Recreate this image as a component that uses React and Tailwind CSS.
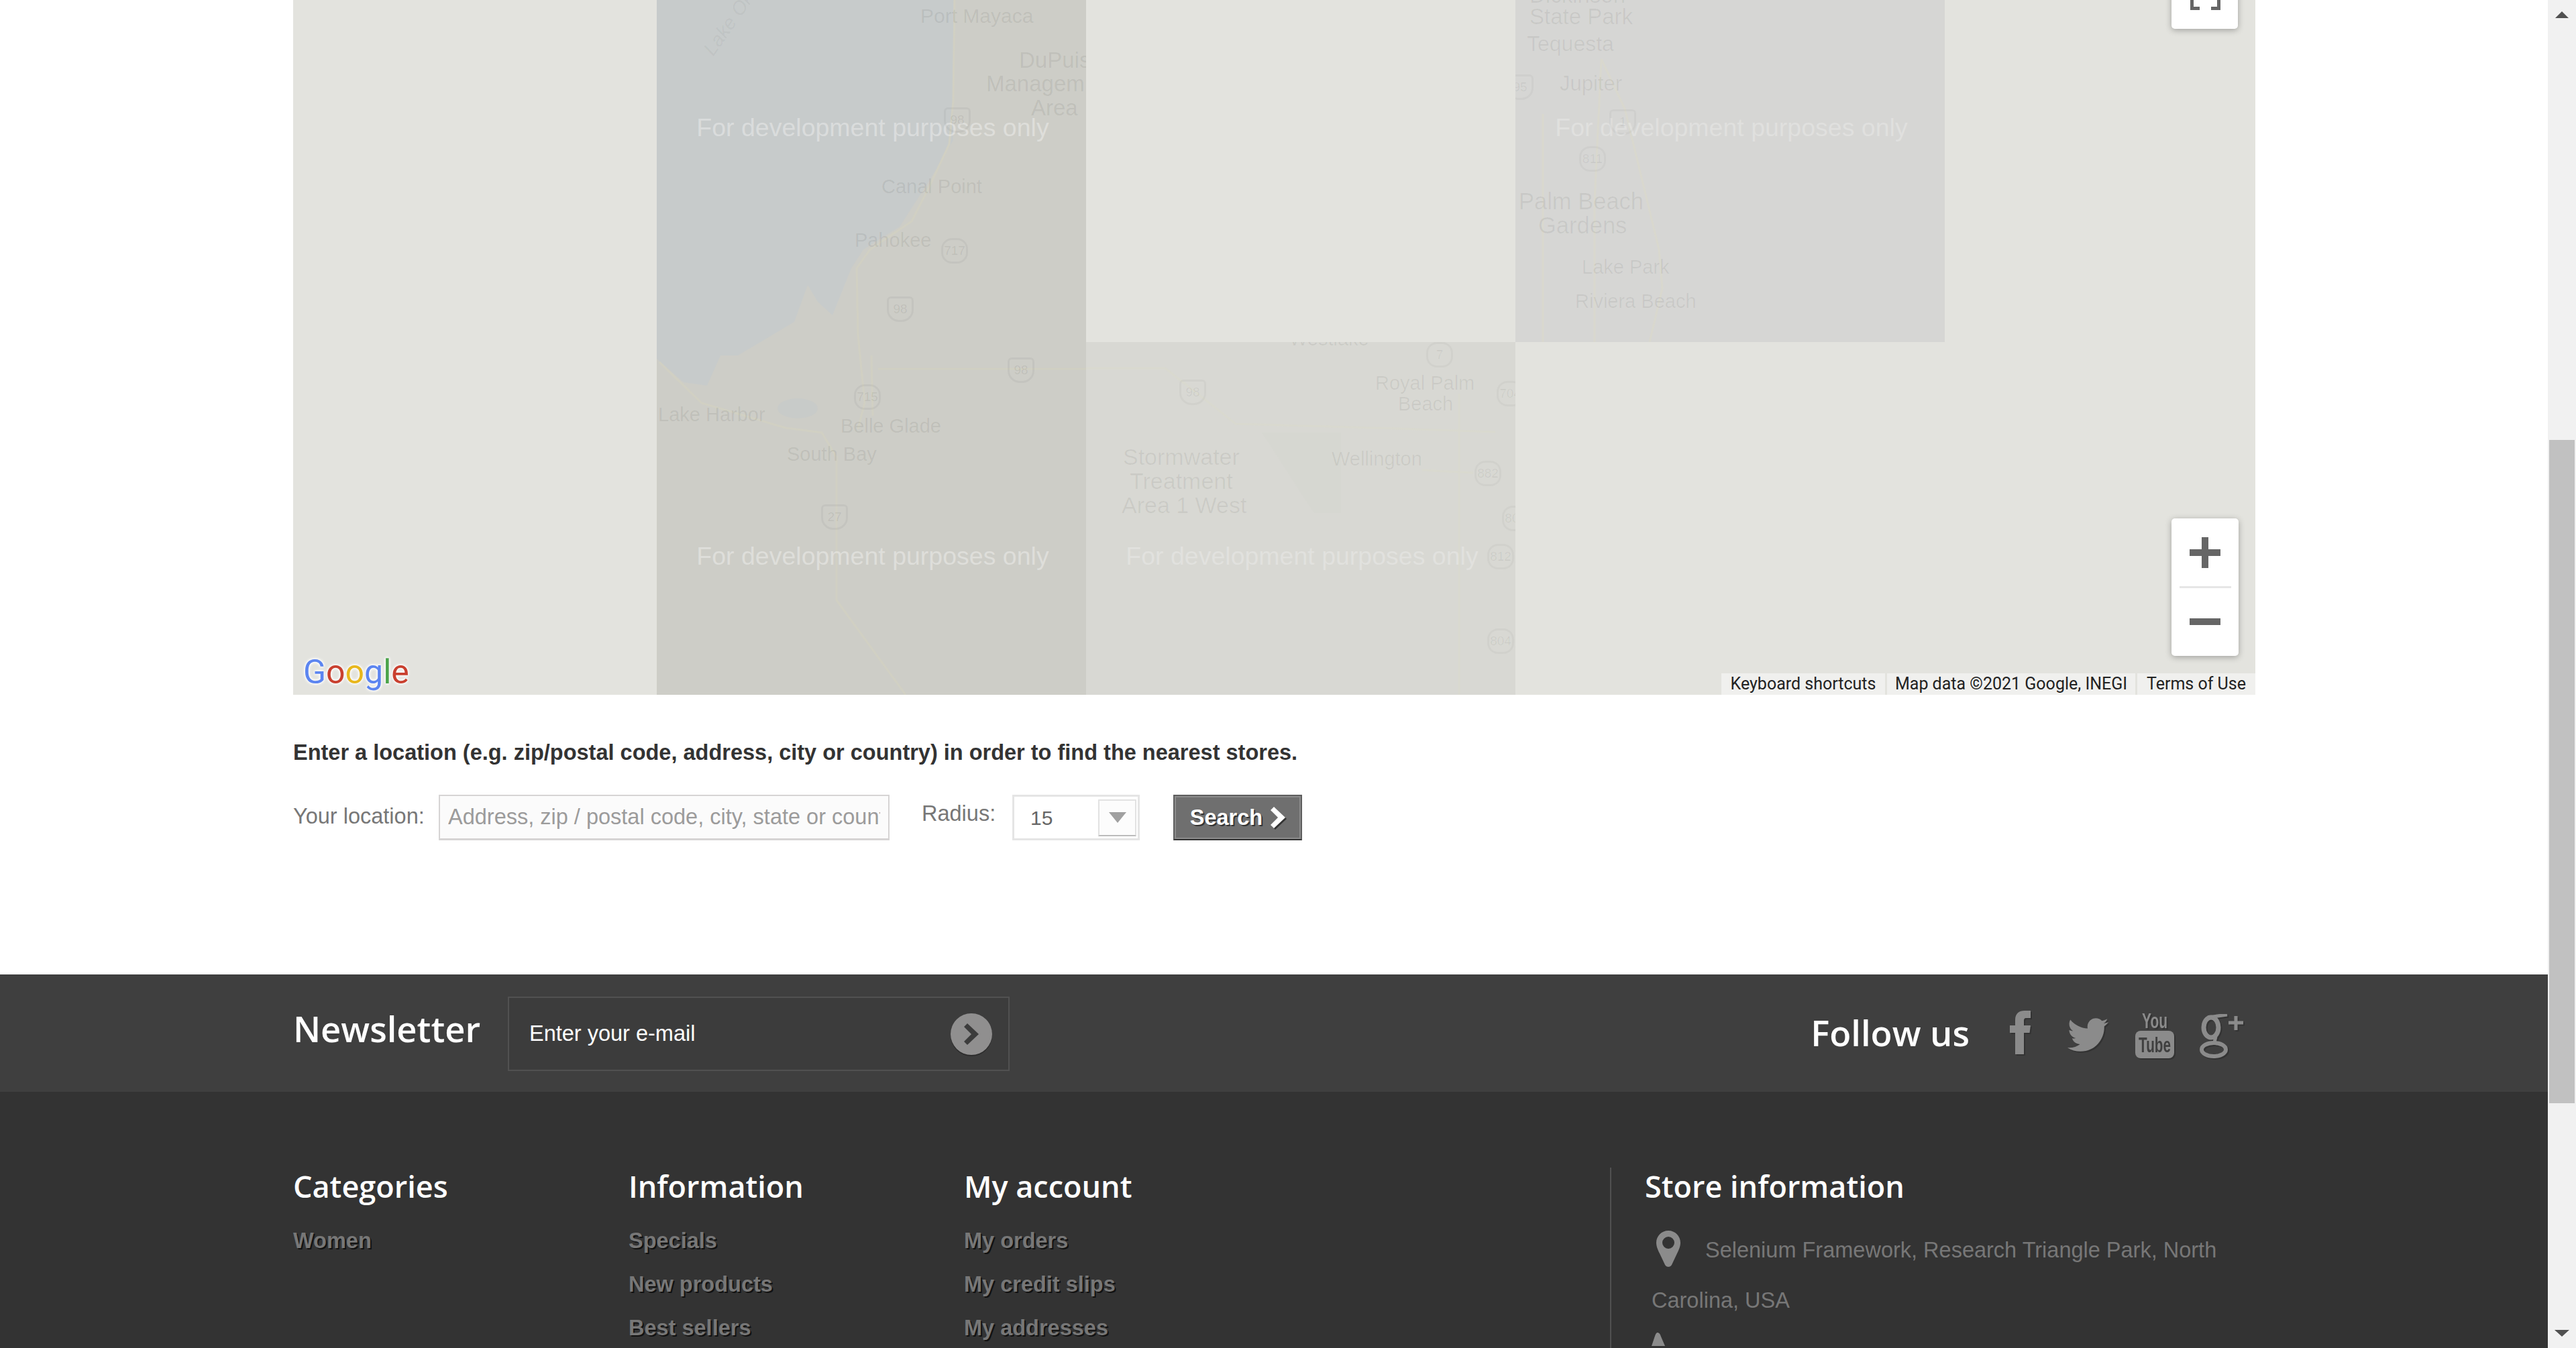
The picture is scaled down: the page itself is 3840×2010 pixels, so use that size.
import React from 'react';
import { FaTwitter } from 'react-icons/fa';

// labels baked into the map tiles, very faint
const tileLabels = {
  a: [
    { t: 'Port Mayaca', c: 'left-[393px] top-[9px] text-[30px]' },
    { t: 'DuPuis', c: 'left-[540px] top-[75px] text-[33px]' },
    { t: 'Managem', c: 'left-[491px] top-[110px] text-[33px]' },
    { t: 'Area', c: 'left-[558px] top-[146px] text-[33px]' },
    { t: 'Canal Point', c: 'left-[335px] top-[263px] text-[29px]' },
    { t: 'Pahokee', c: 'left-[295px] top-[343px] text-[29px]' },
    { t: 'Lake Harbor', c: 'left-[2px] top-[603px] text-[29px]' },
    { t: 'Belle Glade', c: 'left-[274px] top-[620px] text-[29px]' },
    { t: 'South Bay', c: 'left-[194px] top-[662px] text-[29px]' },
  ],
  b: [
    { t: 'Westlake', c: 'left-[303px] top-[-20px] text-[29px]' },
    { t: 'Royal Palm', c: 'left-[431px] top-[46px] text-[29px]' },
    { t: 'Beach', c: 'left-[465px] top-[77px] text-[29px]' },
    { t: 'Stormwater', c: 'left-[55px] top-[156px] text-[34px]' },
    { t: 'Treatment', c: 'left-[65px] top-[192px] text-[34px]' },
    { t: 'Area 1 West', c: 'left-[53px] top-[228px] text-[34px]' },
    { t: 'Wellington', c: 'left-[366px] top-[159px] text-[29px]' },
  ],
  c: [
    { t: 'Dickinson', c: 'left-[21px] top-[-22px] text-[33px]' },
    { t: 'State Park', c: 'left-[21px] top-[10px] text-[33px]' },
    { t: 'Tequesta', c: 'left-[17px] top-[50px] text-[32px]' },
    { t: 'Jupiter', c: 'left-[66px] top-[110px] text-[31px]' },
    { t: 'Palm Beach', c: 'left-[5px] top-[285px] text-[34.5px]' },
    { t: 'Gardens', c: 'left-[34px] top-[321px] text-[34.5px]' },
    { t: 'Lake Park', c: 'left-[99px] top-[383px] text-[29px]' },
    { t: 'Riviera Beach', c: 'left-[89px] top-[434px] text-[29px]' },
  ],
};

const tileShields = {
  a: [
    { t: '98', us: true, c: 'left-[428px] top-[160px]' },
    { t: '717', c: 'left-[424px] top-[355px]' },
    { t: '98', us: true, c: 'left-[343px] top-[442px]' },
    { t: '98', us: true, c: 'left-[523px] top-[533px]' },
    { t: '715', c: 'left-[294px] top-[573px]' },
    { t: '27', us: true, c: 'left-[245px] top-[752px]' },
  ],
  b: [
    { t: '7', c: 'left-[507px] top-[0px]' },
    { t: '98', us: true, c: 'left-[139px] top-[56px]' },
    { t: '704', c: 'left-[612px] top-[58px]' },
    { t: '882', c: 'left-[579px] top-[177px]' },
    { t: '809', c: 'left-[620px] top-[244px]' },
    { t: '812', c: 'left-[598px] top-[301px]' },
    { t: '804', c: 'left-[598px] top-[427px]' },
  ],
  c: [
    { t: '95', us: true, c: 'left-[-13px] top-[111px]' },
    { t: '1', us: true, c: 'left-[140px] top-[163px]' },
    { t: '811', c: 'left-[95px] top-[218px]' },
  ],
};

const footerCols = [
  { title: 'Categories', w: 'w-[500px]', links: ['Women'] },
  { title: 'Information', w: 'w-[500px]', links: ['Specials', 'New products', 'Best sellers'] },
  { title: 'My account', w: 'w-[963px]', links: ['My orders', 'My credit slips', 'My addresses'] },
];

function Shield({ item, faint }) {
  return (
    <div
      className={`absolute flex h-[38px] w-[40px] items-center justify-center border-[3px] text-[19px] ${faint ? 'border-black/[0.03] text-black/[0.06]' : 'border-black/[0.04] text-black/[0.08]'} ${item.us ? 'rounded-b-[18px] rounded-t-[6px]' : 'rounded-[16px]'} ${item.c}`}
    >
      {item.t}
    </div>
  );
}

function Watermark({ pos, faint }) {
  return (
    <div className={`absolute left-[2px] w-[640px] text-center text-[37.5px] leading-[44px] ${faint ? 'text-white/25' : 'text-white/35'} ${pos}`}>
      For development purposes only
    </div>
  );
}

function Tile({ name, pos, bg, faint, children }) {
  return (
    <div className={`absolute w-[640px] overflow-hidden ${pos} ${bg}`}>
      {children}
      {tileLabels[name].map((l) => (
        <div key={l.t} className={`absolute whitespace-nowrap leading-[30px] ${faint ? 'text-black/[0.06]' : 'text-black/[0.08]'} ${l.c}`}>
          {l.t}
        </div>
      ))}
      {tileShields[name].map((s, i) => (
        <Shield key={i} item={s} faint={faint} />
      ))}
    </div>
  );
}

function MapView() {
  return (
    <div className="relative h-[1036px] overflow-hidden bg-[#e3e3de]">
      <Tile name="a" pos="left-[542px] top-0 h-[1036px]" bg="bg-[#cdcdc7]">
        <svg className="absolute inset-0" width="640" height="1036" fill="none">
          <path d="M0 0H442V209L406 270 362 338 308 372 290 400 262 470 240 450 225 425 205 480 121 530 95 530 75 575 40 570 0 535Z" fill="#c7cbcb" />
          <ellipse cx="210" cy="609" rx="30" ry="15" fill="#c8cbc9" />
          <path d="M444 0 442 150 436 215 408 275 380 330 318 372 298 400 300 500 310 600 300 640" stroke="#d1d0c3" strokeWidth="3" />
          <path d="M4 540 67 601 192 638 246 645 268 682V895L371 1036" stroke="#d1d0c3" strokeWidth="3" />
          <path d="M330 550H640" stroke="#d0cfc2" strokeWidth="3" />
          <path d="M320 530 322 620" stroke="#d1d0c3" strokeWidth="3" />
        </svg>
        <div className="absolute left-[76px] top-[64px] origin-left -rotate-[55deg] whitespace-nowrap text-[29px] italic leading-[30px] text-black/[0.05]">
          Lake Okeechobee
        </div>
        <Watermark pos="top-[168px]" />
        <Watermark pos="top-[807px]" />
      </Tile>
      <Tile name="b" pos="left-[1182px] top-[510px] h-[526px]" bg="bg-[#d8d8d3]" faint>
        <svg className="absolute inset-0" width="640" height="526" fill="none">
          <path d="M0 39H118L223 122 463 129 610 134" stroke="#d9d9cf" strokeWidth="3" />
          <path d="M556 77V526" stroke="#d9d9cf" strokeWidth="3" />
          <path d="M501 191 577 195" stroke="#d9d9cf" strokeWidth="3" />
          <path d="M262 135 340 255 H380 V135" fill="#d6d7d1" />
        </svg>
        <Watermark pos="top-[297px]" faint />
      </Tile>
      <Tile name="c" pos="left-[1822px] top-0 h-[510px]" bg="bg-[#d6d6d4]" faint>
        <svg className="absolute inset-0" width="640" height="510" fill="none">
          <path d="M128 88 163 162 214 372 219 430 200 510" stroke="#d9d8ce" strokeWidth="3" />
          <path d="M128 88 118 300V510" stroke="#d9d8ce" strokeWidth="3" />
          <path d="M41 170V510" stroke="#d9d8ce" strokeWidth="3" />
        </svg>
        <Watermark pos="top-[168px]" faint />
      </Tile>

      {/* fullscreen */}
      <div className="absolute left-[2800px] top-[-40px] h-[83px] w-[99px] rounded-[5px] bg-white shadow-[0_2px_10px_rgba(0,0,0,0.3)]">
        <svg className="absolute left-[28px] top-[25px]" width="45" height="30">
          <path d="M0 0H5V25H14V30H0ZM45 0H40V25H31V30H45Z" fill="#666" />
        </svg>
      </div>

      {/* zoom */}
      <div className="absolute left-[2800px] top-[773px] flex h-[205px] w-[100px] flex-col items-center rounded-[5px] bg-white shadow-[0_2px_10px_rgba(0,0,0,0.3)]">
        <svg className="mt-[28px]" width="46" height="46">
          <path d="M18 0H28V18H46V28H28V46H18V28H0V18H18Z" fill="#666" />
        </svg>
        <div className="mt-[27px] h-[3px] w-[77px] bg-[#e6e6e6]" />
        <div className="mt-[45px] h-[10px] w-[46px] bg-[#666]" />
      </div>

      {/* logo */}
      <div className="absolute bottom-[7px] left-[15px] font-['Roboto'] text-[50px] font-normal leading-[54px] [text-shadow:0_0_5px_#fff,0_0_5px_#fff,0_0_3px_#fff]">
        <span className="text-[#5c85f0]">G</span>
        <span className="text-[#c9402f]">o</span>
        <span className="text-[#e8b71c]">o</span>
        <span className="text-[#5c85f0]">g</span>
        <span className="text-[#4ba34a]">l</span>
        <span className="text-[#c9402f]">e</span>
      </div>

      {/* attribution */}
      <div className="absolute bottom-0 right-0 flex h-[32px] gap-[3px] font-['Roboto'] text-[25px] leading-[32px] text-[#222]">
        <div className="w-[244px] bg-[#f0f0ee] text-center">Keyboard shortcuts</div>
        <div className="w-[370px] bg-[#f0f0ee] text-center">Map data ©2021 Google, INEGI</div>
        <div className="w-[176px] bg-[#f0f0ee] text-center">Terms of Use</div>
      </div>
    </div>
  );
}

function SearchForm() {
  return (
    <div className="h-[417px] pt-[66px]">
      <p className="text-[32.5px] font-bold leading-[40px] text-[#333]">
        Enter a location (e.g. zip/postal code, address, city or country) in order to find the nearest stores.
      </p>
      <div className="mt-[43px] flex items-start">
        <label className="mt-[14px] w-[217px] text-[32.5px] leading-[36px] text-[#777]">Your location:</label>
        <input
          className="h-[68px] w-[672px] border-2 border-b-[3px] border-[#d6d4d4] bg-[#fbfbfb] px-[12px] text-[32.5px] outline-none placeholder:text-[#9c9b9b]"
          placeholder="Address, zip / postal code, city, state or country"
        />
        <label className="ml-[48px] mt-[10px] w-[135px] text-[32.5px] leading-[36px] text-[#777]">Radius:</label>
        <div className="flex h-[68px] w-[190px] items-center justify-between border-[3px] border-[#e5e5e5] bg-white pl-[24px] pr-[2px] text-[30px] text-[#666]">
          15
          <div className="flex h-[55px] w-[57px] items-center justify-center border-2 border-[#e2e2e2] border-b-[#bbb] bg-[#fcfcfc]">
            <div className="h-0 w-0 border-x-[13px] border-t-[16px] border-x-transparent border-t-[#a0a0a0]" />
          </div>
        </div>
        <button className="ml-[50px] flex h-[68px] w-[192px] items-center justify-center gap-[12px] border-2 border-[#5e5e5e] border-b-[#333] bg-[#6f6f6f] text-[32.5px] font-bold text-white shadow-[inset_0_0_0_2px_#8b8b8b] [text-shadow:2px_2px_0_#333]">
          Search
          <svg width="22" height="32" className="drop-shadow-[2px_2px_0_#333]">
            <path d="M5 0 22 16 5 32 0 27 11 16 0 5Z" fill="#fff" />
          </svg>
        </button>
      </div>
    </div>
  );
}

function SocialIcons() {
  return (
    <div className="ml-[60px] flex items-center text-[#8b8b8b]">
      <svg width="31" height="65" className="mr-[55px] self-start drop-shadow-[2px_2px_0_#333]">
        <path d="M8 65V33H0V22H8V14C8 4 14 0 22 0H31V11H25C21 11 21 13 21 16V22H31L29.5 33H21V65Z" fill="#8b8b8b" />
      </svg>
      <FaTwitter className="mr-[40px] h-[62px] w-[61px] drop-shadow-[2px_2px_0_#333]" />
      <svg width="58" height="71" className="mr-[38px] drop-shadow-[2px_2px_0_#333]">
        <text x="29" y="26" textAnchor="middle" textLength="38" lengthAdjust="spacingAndGlyphs" fontSize="32" fontWeight="700" fill="#8b8b8b" fontFamily="Liberation Sans">You</text>
        <rect x="0" y="30" width="58" height="41" rx="8" fill="#8b8b8b" />
        <text x="29" y="62" textAnchor="middle" textLength="48" lengthAdjust="spacingAndGlyphs" fontSize="32" fontWeight="700" fill="#3f3f3f" fontFamily="Liberation Sans">Tube</text>
      </svg>
      <svg width="66" height="66" fill="none" stroke="#8b8b8b" className="mt-[5px] drop-shadow-[2px_2px_0_#333]">
        <ellipse cx="17" cy="20" rx="11" ry="15" strokeWidth="7" />
        <ellipse cx="21" cy="53" rx="18" ry="10" strokeWidth="6" />
        <path d="M12 5 41 1M24 34 22 42" strokeWidth="5" />
        <path d="M43 13H65M54 3V24" strokeWidth="5" />
      </svg>
    </div>
  );
}

function Newsletter() {
  return (
    <div className="flex h-[175px] items-start bg-[#3f3f3f] pl-[437px] text-white">
      <h4 className="mt-[47px] w-[320px] font-['Open_Sans'] text-[52.5px] font-semibold leading-[68px]">Newsletter</h4>
      <div className="mt-[33px] flex h-[111px] w-[748px] items-center justify-between border-2 border-[#515151] bg-[#3c3c3c] pl-[30px] pr-[24px]">
        <span className="text-[32.5px]">Enter your e-mail</span>
        <div className="flex h-[62px] w-[62px] items-center justify-center rounded-full bg-[#908f8f] shadow-[0_2px_0_#2d2d2d]">
          <svg width="22" height="32">
            <path d="M5 0 22 16 5 32 0 27 11 16 0 5Z" fill="#3c3c3c" />
          </svg>
        </div>
      </div>
      <div className="ml-auto mr-[453px] mt-[54px] flex items-center">
        <h4 className="-mt-[1px] self-start font-['Open_Sans'] text-[52.5px] font-semibold leading-[68px]">Follow us</h4>
        <SocialIcons />
      </div>
    </div>
  );
}

function FooterLinks() {
  return (
    <div className="flex h-[382px] overflow-hidden bg-[#333] pl-[437px] pt-[113px]">
      {footerCols.map((col) => (
        <div key={col.title} className={col.w}>
          <h4 className="-mt-[2px] font-['Open_Sans'] text-[45px] font-semibold leading-[60px] text-white">{col.title}</h4>
          <ul className="mt-[19px]">
            {col.links.map((l) => (
              <li key={l} className="text-[32.5px] font-bold leading-[65px] text-[#777] [text-shadow:2px_2px_0_#111]">
                {l}
              </li>
            ))}
          </ul>
        </div>
      ))}
      <div className="w-[962px] border-l-2 border-[#515151] pl-[50px]">
        <h4 className="-mt-[2px] font-['Open_Sans'] text-[45px] font-semibold leading-[60px] text-white">Store information</h4>
        <p className="ml-[10px] mt-[28px] text-[32.5px] leading-[75px] text-[#777]">
          <svg width="36" height="54" className="mb-[8px] ml-[7px] mr-[37px] inline-block align-middle">
            <path fillRule="evenodd" d="M18 0C8 0 0 8 0 18 0 24 3 30 5 34L13 51C15 55 21 55 23 51L31 34C33 30 36 24 36 18 36 8 28 0 18 0ZM18 9A9 9 0 1 1 18 27 9 9 0 1 1 18 9Z" fill="#8b8b8b" />
          </svg>
          Selenium Framework, Research Triangle Park, North Carolina, USA
        </p>
        <svg width="20" height="40" className="ml-[10px] mt-[10px]">
          <path d="M9 0C7 0 6 2 4 8L0 20H20L14 6C13 2 11 0 9 0Z" fill="#8b8b8b" />
        </svg>
      </div>
    </div>
  );
}

function Scrollbar() {
  return (
    <div className="flex h-full w-[42px] flex-col items-center bg-[#f1f1f1]">
      <div className="mt-[17px] h-0 w-0 border-x-[10px] border-b-[10px] border-x-transparent border-b-[#505050]" />
      <div className="mt-[629px] h-[989px] w-[38px] bg-[#c1c1c1]" />
      <div className="mt-[338px] h-0 w-0 border-x-[11px] border-t-[10px] border-x-transparent border-t-[#505050]" />
    </div>
  );
}

export default function App() {
  return (
    <div className="flex h-[2010px] w-full overflow-hidden bg-white font-['Liberation_Sans',sans-serif]">
      <div className="min-w-0 flex-1">
        <div className="pl-[437px] pr-[436px]">
          <MapView />
          <SearchForm />
        </div>
        <Newsletter />
        <FooterLinks />
      </div>
      <Scrollbar />
    </div>
  );
}
